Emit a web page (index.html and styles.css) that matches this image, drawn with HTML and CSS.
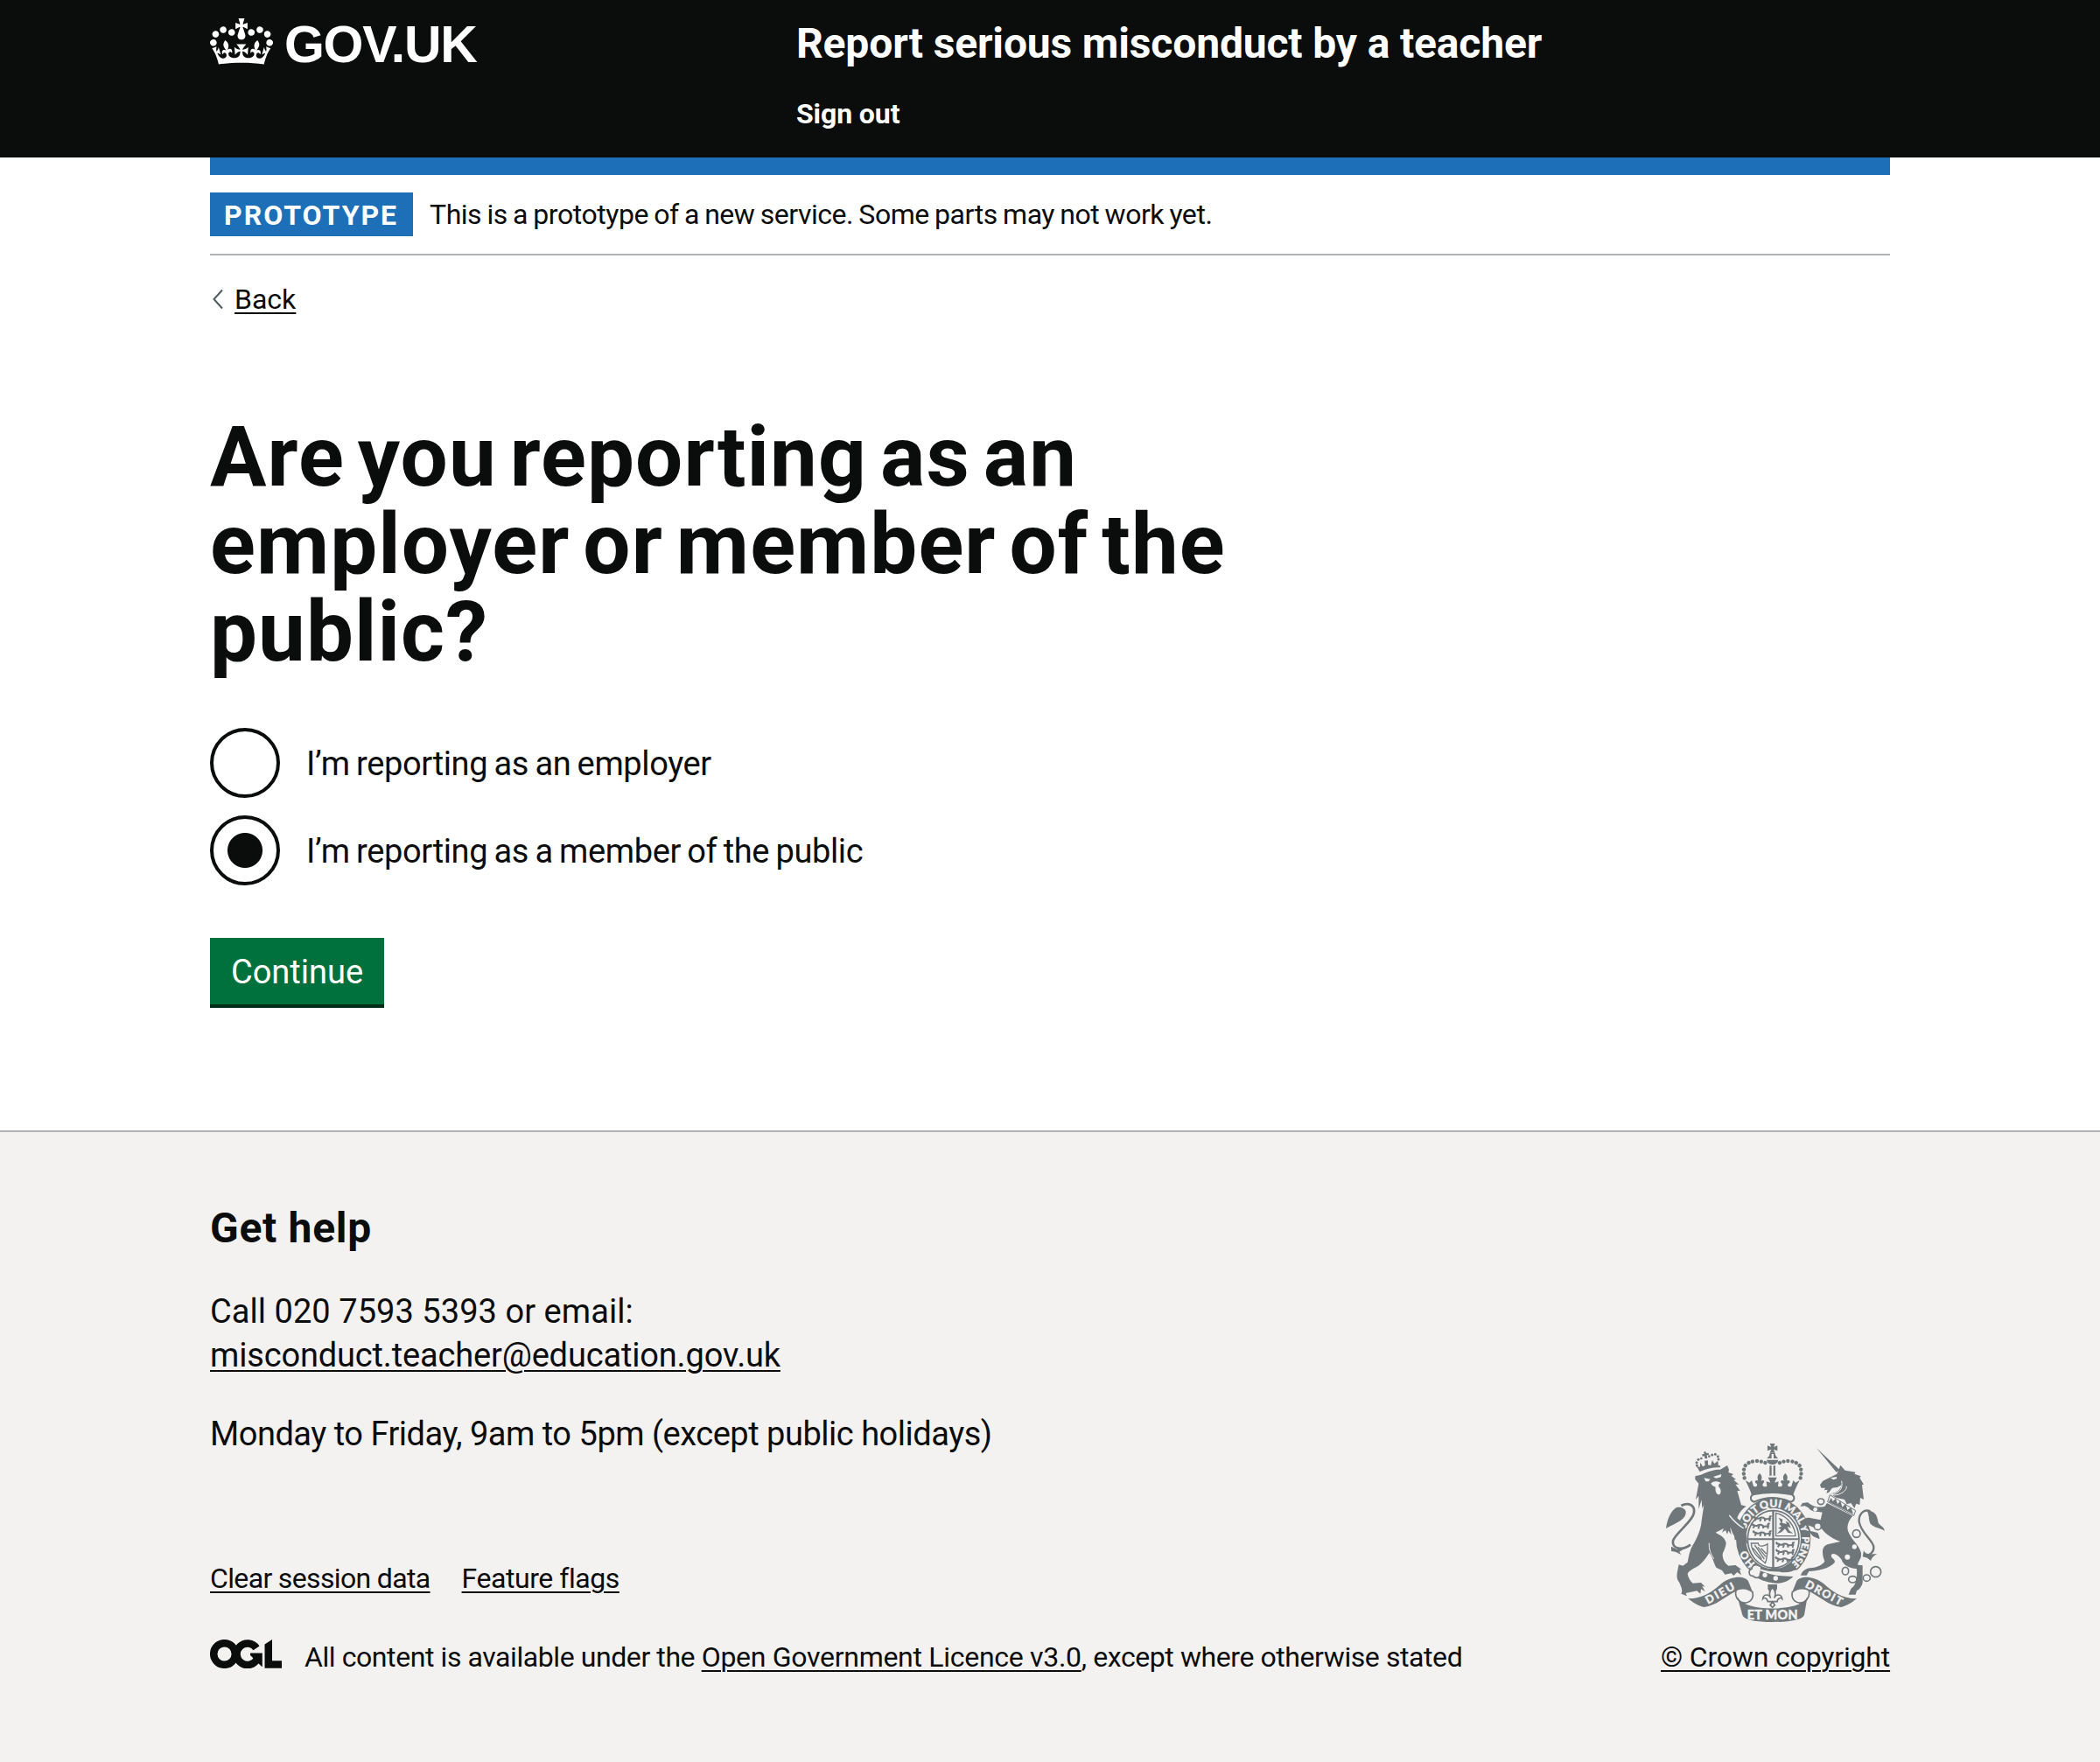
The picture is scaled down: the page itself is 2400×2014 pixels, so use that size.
FILE: index.html
```
<!DOCTYPE html>
<html lang="en">
<head>
<meta charset="utf-8">
<title>Are you reporting as an employer or member of the public?</title>
<link rel="stylesheet" href="styles.css">
</head>
<body>
<header class="header">
  <div class="container header-inner">
    <a class="logo" href="#">
      <svg class="crown" viewBox="0 0 132 97" aria-hidden="true"><path fill="currentColor" fill-rule="evenodd" d="M25 30.2c3.5 1.5 7.7-.2 9.1-3.7 1.5-3.6-.2-7.8-3.9-9.2-3.6-1.4-7.6.3-9.1 3.9-1.4 3.5.3 7.5 3.9 9zM9 39.5c3.6 1.5 7.8-.2 9.2-3.7 1.5-3.6-.2-7.8-3.9-9.1-3.6-1.5-7.6.2-9.1 3.8-1.4 3.5.3 7.5 3.8 9zM4.4 57.2c3.5 1.5 7.7-.2 9.1-3.8 1.5-3.6-.2-7.7-3.9-9.1-3.5-1.5-7.6.3-9.1 3.8-1.4 3.5.3 7.6 3.9 9.1zm38.3-21.4c3.5 1.5 7.7-.2 9.1-3.8 1.5-3.6-.2-7.7-3.9-9.1-3.6-1.5-7.6.3-9.1 3.8-1.3 3.6.4 7.7 3.9 9.1zm64.4-5.6c-3.6 1.5-7.8-.2-9.1-3.7-1.5-3.6.2-7.8 3.8-9.2 3.6-1.4 7.7.3 9.2 3.9 1.3 3.5-.4 7.5-3.9 9zm15.9 9.3c-3.6 1.5-7.7-.2-9.1-3.7-1.5-3.6.2-7.8 3.7-9.1 3.6-1.5 7.7.2 9.2 3.8 1.5 3.5-.3 7.5-3.8 9zm4.7 17.7c-3.6 1.5-7.8-.2-9.2-3.8-1.5-3.6.2-7.7 3.9-9.1 3.6-1.5 7.7.3 9.2 3.8 1.3 3.5-.4 7.6-3.9 9.1zM89.3 35.8c-3.6 1.5-7.8-.2-9.2-3.8-1.4-3.6.2-7.7 3.9-9.1 3.6-1.5 7.7.3 9.2 3.8 1.4 3.6-.3 7.7-3.9 9.1zM69.7 17.7l8.9 4.7V9.3l-8.9 2.8c-.2-.3-.5-.6-.9-.9L72.4 0H59.6l3.5 11.2c-.3.3-.6.5-.9.9l-8.8-2.8v13.1l8.8-4.7c.3.3.6.7.9.9l-5 15.4v.1c-.2.8-.4 1.6-.4 2.4 0 4.1 3.1 7.5 7 8.1h.2c.3 0 .7.1 1 .1.4 0 .7 0 1-.1h.2c4-.6 7.1-4.1 7.1-8.1 0-.8-.1-1.7-.4-2.4V34l-5.1-15.4c.4-.2.7-.6 1-.9zM66 92.8c16.9 0 32.8 1.1 47.1 3.2 4-16.9 8.9-26.7 14-33.5l-9.6-3.4c1 4.9 1.1 7.2 0 10.2-1.5-1.4-3-4.3-4.2-8.7L108.6 76c2.8-2 5-3.2 7.5-3.3-4.4 9.4-10 11.9-13.6 11.2-4.3-.8-6.3-4.6-5.6-7.9 1-4.7 5.7-5.9 8-.5 4.3-8.7-3-11.4-7.6-8.8 7.1-7.2 7.9-13.5 2.1-21.1-8 6.1-8.1 12.3-4.5 20.8-4.7-5.4-12.1-2.5-9.5 6.2 3.4-5.2 7.9-2 7.2 3.1-.6 4.3-6.4 7.8-13.5 7.2-10.3-.9-10.9-8-11.2-13.8 2.5-.5 7.1 1.8 11 7.3L80.2 60c-4.1 4.4-8 5.3-12.3 5.4 1.4-4.4 8-11.6 8-11.6H55.5s6.4 7.2 7.9 11.6c-4.2-.1-8-1-12.3-5.4l1.4 16.4c3.9-5.5 8.5-7.7 10.9-7.3-.3 5.8-.9 12.8-11.1 13.8-7.2.6-12.9-2.9-13.5-7.2-.7-5 3.8-8.3 7.1-3.1 2.7-8.7-4.6-11.6-9.4-6.2 3.7-8.5 3.6-14.7-4.6-20.8-5.8 7.6-5 13.9 2.2 21.1-4.7-2.6-11.9.1-7.7 8.8 2.3-5.5 7.1-4.2 8.1.5.7 3.3-1.3 7.1-5.7 7.9-3.5.7-9-1.8-13.5-11.2 2.5.1 4.7 1.3 7.5 3.3l-4.7-15.4c-1.2 4.4-2.7 7.2-4.3 8.7-1.1-3-.9-5.3 0-10.2l-9.5 3.4c5 6.9 9.9 16.7 14 33.5 14.8-2.1 30.8-3.2 47.7-3.2z"/></svg>
      <span class="logo-text">GOV.UK</span>
    </a>
    <div class="header-content">
      <a class="service-name" href="#">Report serious misconduct by a teacher</a>
      <a class="sign-out" href="#">Sign out</a>
    </div>
  </div>
</header>

<div class="container">
  <div class="blue-bar"></div>
  <div class="phase-banner">
    <strong class="tag">PROTOTYPE</strong>
    <span class="phase-text">This is a prototype of a new service. Some parts may not work yet.</span>
  </div>
  <a class="back" href="#">
    <svg class="chevron" viewBox="0 0 15 24" aria-hidden="true"><path d="M13 1.500 3.500 12 13 22.500" fill="none" stroke="#505a5f" stroke-width="2"/></svg>
    <span class="back-text">Back</span>
  </a>
  <main class="main">
    <h1 class="heading">Are you reporting as an employer or member of the public?</h1>
    <div class="radios">
      <label class="radio"><span class="circle"></span><span class="radio-label">I’m reporting as an employer</span></label>
      <label class="radio"><span class="circle checked"></span><span class="radio-label">I’m reporting as a member of the public</span></label>
    </div>
    <button class="button" type="button">Continue</button>
  </main>
</div>

<footer class="footer">
  <div class="container">
    <h2 class="help-title">Get help</h2>
    <p class="help"><span class="call">Call 020 7593 5393 or email:</span><br><a class="link" href="#">misconduct.teacher@education.gov.uk</a></p>
    <p class="help hours">Monday to Friday, 9am to 5pm (except public holidays)</p>
    <div class="meta">
      <div class="meta-main">
        <nav class="meta-links">
          <a class="link" href="#">Clear session data</a>
          <a class="link flags" href="#">Feature flags</a>
        </nav>
        <div class="licence">
          <svg class="ogl" viewBox="0 0 82 33" aria-label="Open Government Licence" role="img">
            <g fill="none" stroke="#0b0c0c" stroke-width="8.500">
              <circle cx="16.500" cy="16.500" r="12.300"/>
              <path d="M53 9.800A12.300 12.300 0 1 0 54 22"/>
            </g>
            <path fill="#0b0c0c" d="M46 15.500H59.800V31H59.200L46 18ZM62.500 5.500 71 0V24.200H82V32.700H62.500Z"/>
          </svg>
          <p class="licence-text">All content is available under the <a class="link" href="#">Open Government Licence v3.0</a>, except where otherwise stated</p>
        </div>
      </div>
      <a class="copyright" href="#">
        <svg class="crest" viewBox="54 48 786 636" aria-hidden="true">
          <defs>
            <path id="garter" pathLength="360" d="M440 494A99 108 0 0 1 440 278A99 108 0 0 1 440 494"/>
            <path id="maltese" d="M-9-16H9L4-4L17-9V9L4 4L9 16H-9L-4 4L-17 9V-9L-4-4Z"/>
            <g id="lions" fill="none" stroke-width="6">
              <path d="M2 6C10 0 14 14 24 8S38 6 44 10S56 6 64 11M8 17L14 9M26 19L30 9M44 18L42 9M60 19L58 9M2 0L10 8M66 2C58 0 58 6 62 9"/>
            </g>
          </defs>
          <g fill="#6f777b" stroke="none">
            <!-- crown -->
            <use href="#maltese" x="437" y="76"/>
            <path d="M428 93H446C447 103 452 108 457 111H441V96H434V111H417C423 108 427 103 428 93ZM417 116H457C455 127 447 132 437 132S419 127 417 116Z"/>
            <path d="M427 136H434V170H427ZM440 136H447V170H440Z"/>
            <path d="M341 178A50 60 0 0 1 341 140Q352 121 382 120Q402 120 424 131M533 178A50 60 0 0 0 533 140Q522 121 492 120Q472 120 450 131" fill="none" stroke="#6f777b" stroke-width="13" stroke-linecap="round" stroke-dasharray="0.100 14.500"/>
            <path d="M344 186L358 194L366 186L372 206C382 212 390 202 380 196C372 188 386 182 388 190C386 180 382 172 393 162C404 172 400 180 398 190C402 182 414 188 406 196C398 204 408 212 418 206L416 190L430 194L422 176H452L444 194L458 190L456 206C466 212 476 204 468 196C460 188 472 182 476 190C474 180 470 172 481 162C492 172 488 180 486 190C488 182 502 188 494 196C484 202 492 212 502 206L508 186L516 194L530 186C520 206 512 222 508 238C466 228 408 228 366 238C362 222 354 206 344 186Z"/>
            <!-- garter and shield -->
            <ellipse cx="440" cy="386" rx="128" ry="140"/>
            <path d="M374 234C359 238 359 256 374 260C415 242 459 242 500 260C515 256 515 238 500 234C459 226 415 226 374 234Z" fill="#f3f2f1" stroke="#6f777b" stroke-width="6"/>
            <ellipse cx="440" cy="386" rx="94" ry="104" fill="#f3f2f1"/>
            <ellipse cx="440" cy="388" rx="88" ry="98" fill="none" stroke="#6f777b" stroke-width="5"/>
            <path d="M436 288H443V385H526V391H443V488H436V391H353V385H436Z"/>
            <g stroke="#6f777b">
              <use href="#lions" x="368" y="308"/><use href="#lions" x="362" y="333"/><use href="#lions" x="368" y="359"/>
              <use href="#lions" x="447" y="398"/><use href="#lions" x="447" y="423"/><use href="#lions" x="445" y="448"/>
              <path d="M449 298V377H516C514 345 492 310 449 298Z" fill="none" stroke-width="4"/>
              <path d="M364 402H388C390 418 412 410 420 404C420 430 420 455 412 470C398 456 366 440 364 402ZM376 408L409 456M387 415L414 448M398 419L416 438M370 418L400 455" fill="none" stroke-width="4"/>
            </g>
            <path d="M458 314L472 320L470 332L486 336L482 326L494 332L500 350L488 344L494 358L508 368L490 366L480 352L468 364L452 370L466 354L456 350L468 344L460 336L466 330Z"/>
            <g fill="#f3f2f1" stroke="#f3f2f1" stroke-width="1" class="motto">
              <text font-size="36"><textPath href="#garter" startOffset="37">HO</textPath></text>
              <text font-size="36"><textPath href="#garter" startOffset="108">SOIT</textPath></text>
              <text font-size="37"><textPath href="#garter" startOffset="156">QUI</textPath></text>
              <text font-size="36"><textPath href="#garter" startOffset="200">MAL</textPath></text>
              <text font-size="35"><textPath href="#garter" startOffset="246">Y</textPath></text>
              <text font-size="34"><textPath href="#garter" startOffset="266">PENSE</textPath></text>
            </g>
            <path d="M362 474C400 500 450 506 530 492L520 530C470 552 400 542 362 516Z" fill="#f3f2f1"/>
            <path d="M370 482C410 506 450 516 508 516C480 546 430 548 372 514Z"/>
            <path d="M396 482C380 470 366 478 366 490C352 496 356 514 370 514C382 526 398 518 394 504" fill="#f3f2f1" stroke="#6f777b" stroke-width="5"/>
            <circle cx="411" cy="511" r="8" fill="#f3f2f1"/><circle cx="448" cy="522" r="8" fill="#f3f2f1"/>
            <path d="M432 487H460L466 498H428ZM462 500C472 484 488 476 500 466L520 488C506 500 486 504 462 500Z"/>

            <!-- lion -->
            <g transform="translate(60 75)">
              <g><circle cx="118" cy="60" r="4.500"/><circle cx="117" cy="50" r="4.500"/><circle cx="123" cy="40" r="4.500"/><circle cx="133" cy="36" r="4"/><circle cx="160" cy="29" r="4"/><circle cx="170" cy="24" r="4.500"/><circle cx="181" cy="22" r="4.500"/><circle cx="190" cy="29" r="4.500"/><circle cx="192" cy="39" r="4.500"/>
              <path d="M141 14L148 12L150 18L158 17L159 25L152 25L154 36L145 37L144 28L137 29L136 21L143 21ZM116 62L128 66L130 50L138 64L146 60L144 44L156 43L156 58L166 60L170 42L178 54L190 44L192 62C168 62 146 68 126 78Z"/></g>
              <path d="M126 79C148 69 172 63 198 64" fill="none" stroke="#6f777b" stroke-width="6"/>
              <path d="M112 97L132 92C160 79 178 74 198 74L222 60L228 74L226 84L243 90L236 96L252 108L244 110L262 125L250 125L266 146L256 148C262 165 266 182 270 196L287 200C270 212 262 224 256 240L278 262C290 280 286 304 292 330L284 322L282 342L272 328L266 346L256 330L258 314L248 316L246 302C238 290 236 278 232 272L236 298L226 284L222 296L216 282L204 290L210 276L182 290C194 298 214 304 218 326C216 346 206 358 206 366C206 384 216 398 226 404L250 402L272 418L264 416L270 436L256 426L244 438L236 430L214 434L204 420L184 410C176 398 174 376 160 360C152 374 140 390 126 402C108 414 90 420 86 432C88 444 94 456 104 464L132 462L146 476L136 474L146 492L132 484L130 500L118 490L80 498L84 508L64 500C72 486 60 470 58 462C44 446 50 430 56 400L70 404L86 392C90 370 94 350 104 334C118 310 132 280 134 250L142 196L136 208L134 178L124 210L124 164L114 178L124 122L112 108Z"/>
              <path d="M142 103L164 107L158 115H148ZM174 99L202 90L200 100L184 104ZM166 122C176 112 188 114 200 120C192 124 190 130 194 134C204 146 200 160 192 160C184 158 180 146 182 134L172 130Z" fill="#f3f2f1"/>
              <path d="M229 231C242 248 256 262 278 276" fill="none" stroke="#f3f2f1" stroke-width="4"/>
              <path d="M160 326C158 346 166 366 176 380" fill="none" stroke="#f3f2f1" stroke-width="3"/>
              <path d="M64 198C90 184 112 198 108 222C104 252 46 290 36 318C32 346 66 354 96 332" fill="none" stroke="#6f777b" stroke-width="8"/>
              <path d="M12 276C16 246 28 216 48 204C62 200 78 208 80 218C82 244 56 252 12 276ZM30 338L50 348L84 340L58 356L64 366L44 356L30 354Z"/>
            </g>

            <!-- unicorn -->
            <g transform="translate(510 60)">
              <path d="M78 15L158 91L146 98Z"/>
              <path d="M160 74L176 92L212 98L208 104L230 112L226 118L240 140L234 142L240 192L228 186L226 210L214 206L208 222L196 204L182 208L174 192L146 186L124 172C140 170 158 166 164 142L150 150L132 152L120 168L112 170L116 158L104 160L108 152L94 152L90 142L100 128L124 116L148 104Z"/>
              <path d="M126 118L146 114L148 120L136 124Z" fill="#f3f2f1"/>
              <path d="M164 128C170 154 156 172 126 174C150 184 186 162 180 146" fill="none" stroke="#f3f2f1" stroke-width="3"/>
              <path d="M124 176L212 230L206 247L116 200Z" fill="#f3f2f1" stroke="#6f777b" stroke-width="3"/>
              <path d="M120 200L128 186L134 198L144 188L150 208L160 196L166 218L178 206L184 228L196 218L204 242Z"/>
              <path d="M114 204L202 248C184 268 178 292 192 312C202 334 222 346 230 372C236 394 218 406 220 416L236 418V468C238 482 228 500 216 504L212 518H188L196 498C214 486 218 462 216 430C186 426 170 416 164 398C150 378 130 372 128 384C130 396 144 396 140 408C122 430 82 436 52 438L44 452L24 452C28 436 46 426 62 426C80 424 98 416 106 404C94 374 96 348 122 344L160 336C140 330 108 312 96 292C84 298 70 286 48 280L58 300L82 306L88 320L88 328L66 318C54 306 44 288 38 270L22 276C30 262 38 254 52 254L92 262L98 236C74 234 60 234 50 220L38 214L22 216L30 204L48 202C62 212 72 222 106 216Z"/>
              <g fill="none" stroke="#6f777b" stroke-width="5">
                <ellipse cx="93" cy="199" rx="11" ry="10" fill="#f3f2f1"/><ellipse cx="82" cy="284" rx="12" ry="12" fill="#f3f2f1"/><circle cx="215" cy="309" r="13" fill="#f3f2f1"/>
                <ellipse cx="177" cy="437" rx="11" ry="13"/><ellipse cx="202" cy="466" rx="14" ry="11"/><ellipse cx="250" cy="461" rx="12" ry="11"/><circle cx="281" cy="440" r="18"/>
              </g>
              <g fill="#f3f2f1"><circle cx="208" cy="354" r="8"/><circle cx="184" cy="389" r="9"/><circle cx="74" cy="226" r="7"/></g>
              <path d="M262 232C238 222 222 246 224 268C230 306 272 332 274 354C276 370 262 384 246 384" fill="none" stroke="#6f777b" stroke-width="7"/>
              <path d="M250 228C280 232 286 246 290 272C300 286 308 282 312 300C298 290 280 290 268 280C254 270 262 250 250 228ZM240 366C244 378 256 382 286 378C272 386 268 392 264 402L252 392L236 388Z"/>
            </g>

            <!-- ribbons -->
            <g id="ribbon">
              <path d="M148 592C200 592 236 564 262 540C296 514 342 512 354 532L371 574C352 556 328 556 312 566C274 584 244 616 202 621C180 616 164 604 148 592Z"/>
              <path d="M312 564C306 590 326 608 346 606C366 602 374 586 368 566M316 588C328 618 384 628 437 628" fill="none" stroke="#6f777b" stroke-width="5"/>
            </g>
            <use href="#ribbon" transform="matrix(-1 0 0 1 874 0)"/>
            <path d="M318 590C344 620 396 629 437 629S530 620 556 590L546 648C540 666 490 672 437 672S340 666 334 648Z"/>
            <path d="M421 543H453V558L445 572H429L421 558Z"/>
            <path d="M437 554C452 568 448 580 443 590C450 574 468 576 470 592C464 586 454 592 453 602H421C420 592 410 586 404 592C406 576 424 574 431 590C426 580 422 568 437 554ZM437 602L445 614L437 622L429 614Z" fill="#f3f2f1" stroke="#6f777b" stroke-width="5"/>
            <g fill="#f3f2f1" stroke="#f3f2f1" stroke-width="1" class="motto">
              <text transform="translate(216 611) rotate(-29)" font-size="38" textLength="108">DIEU</text>
              <text transform="translate(547 551) rotate(28)" font-size="38" textLength="138">DROIT</text>
              <text x="350" y="663" font-size="43" textLength="174">ET MON</text>
            </g>
          </g>
        </svg>
        <span class="copyright-text">© Crown copyright</span>
      </a>
    </div>
  </div>
</footer>
</body>
</html>
```
FILE: styles.css
```
* { box-sizing: border-box; }
body {
  margin: 0;
  min-height: 2014px;
  display: flex;
  flex-direction: column;
  background: #fff;
  color: #0b0c0c;
  font: 38px/50px Roboto, "Noto Sans", sans-serif;
}
a { color: inherit; text-decoration: none; }
h1, h2, p { margin: 0; }
.container { width: 1920px; margin: 0 auto; }

.header { height: 180px; background: #0b0c0c; color: #fff; }
.header-inner { display: flex; }
.logo { width: 670px; padding-top: 21px; display: flex; align-items: flex-start; }
.crown { width: 72px; height: 53px; }
.logo-text {
  margin-left: 13px;
  font: bold 59px/60px "Liberation Sans", sans-serif;
  letter-spacing: -1.3px;
}
.header-content { padding-top: 20px; display: flex; flex-direction: column; gap: 30px; font-weight: 700; }
.service-name { font-size: 48px; line-height: 60px; letter-spacing: -.15px; }
.sign-out { font-size: 32px; line-height: 40px; letter-spacing: -.1px; }

.blue-bar { height: 20px; background: #1d70b8; }
.phase-banner {
  padding: 20px 0;
  display: flex;
  gap: 19px;
  border-bottom: 2px solid #b1b4b6;
  font-size: 32px;
  line-height: 50px;
}
.tag {
  width: 232px;
  height: 50px;
  padding-left: 16px;
  background: #1d70b8;
  color: #fff;
  font-weight: 700;
  line-height: 52px;
  letter-spacing: 2px;
}
.phase-text { letter-spacing: -.46px; word-spacing: -1.2px; }
.back { margin-top: 30px; display: flex; width: max-content; font-size: 32px; line-height: 40px; }
.chevron { width: 15px; height: 24px; margin: 8px 12px 0 1px; }
.back-text, .link, .copyright-text {
  text-decoration: underline;
  text-decoration-thickness: 2px;
  text-underline-offset: 4px;
}

.main { padding: 110px 0 144px; }
.heading {
  width: 1270px;
  font-size: 96px;
  line-height: 100px;
  letter-spacing: 1.1px;
  word-spacing: -10px;
}
.radios { margin: 60px 0; display: flex; flex-direction: column; gap: 20px; }
.radio { display: flex; gap: 30px; height: 80px; }
.circle {
  width: 80px;
  height: 80px;
  border: 4px solid #0b0c0c;
  border-radius: 50%;
}
.checked { background: radial-gradient(circle, #0b0c0c 19.500px, transparent 20.500px); }
.radio-label { line-height: 83px; letter-spacing: -.38px; word-spacing: -1.7px; }
.button {
  display: block;
  width: 199px;
  height: 76px;
  padding: 0;
  border: 0;
  background: #00703c;
  box-shadow: 0 4px 0 #002d18;
  color: #fff;
  font: 38px/78px Roboto, "Noto Sans", sans-serif;
}

.footer { flex: 1; padding-top: 80px; border-top: 2px solid #b1b4b6; background: #f3f2f1; }
.help-title { font-size: 48px; line-height: 60px; font-weight: 700; letter-spacing: .7px; }
.help { margin-top: 40px; letter-spacing: -.16px; }
.call { letter-spacing: .05px; }
.hours { letter-spacing: -.48px; }
.meta { margin-top: -18px; display: flex; justify-content: space-between; align-items: flex-end; font-size: 32px; line-height: 40px; }
.meta-links { display: flex; gap: 36px; letter-spacing: -.65px; }
.flags { letter-spacing: -.45px; }
.licence { margin-top: 50px; display: flex; }
.ogl { width: 82px; height: 33px; }
.licence-text { margin-left: 26px; letter-spacing: -.42px; }
.licence-text .link { letter-spacing: -.29px; }
.copyright { width: 262px; display: flex; flex-direction: column; gap: 16px; white-space: nowrap; }
.crest { width: 262px; height: 212px; }
.copyright-text { letter-spacing: -.17px; }
.motto { font-family: Lato, sans-serif; font-weight: 900; }
```
